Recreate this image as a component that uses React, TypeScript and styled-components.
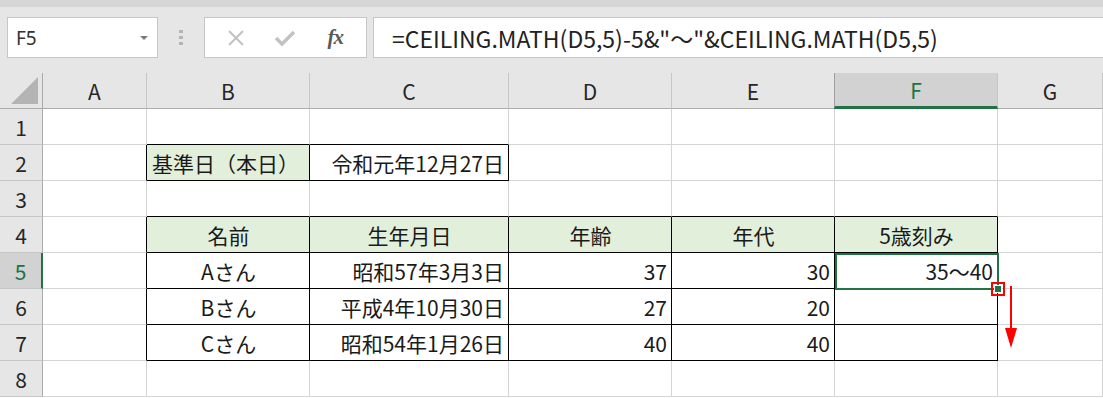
import React from 'react';
import styled, { createGlobalStyle, css } from 'styled-components';

const GlobalStyle = createGlobalStyle`
  html, body {
    margin: 0;
    padding: 0;
    background: #ffffff;
    overflow: hidden;
  }
`;

const GREEN = '#217346';
const GRID = '#d4d4d4';
const CELL_FONT = `"Noto Sans CJK JP", "Noto Sans", sans-serif`;

const Page = styled.div`
  width: 1103px;
  height: 398px;
  overflow: hidden;
  display: flex;
  flex-direction: column;
  font-family: ${CELL_FONT};
`;

const ToolBar = styled.div`
  height: 73px;
  box-sizing: border-box;
  background: #e6e6e6;
  border-top: 7px solid #d6d6d6;
  display: flex;
  align-items: flex-start;
  padding: 10px 0 0 7px;
`;

const Field = styled.div`
  height: 41px;
  box-sizing: border-box;
  background: #ffffff;
  border: 1px solid #c6c6c6;
  display: flex;
  align-items: center;
`;

const NameBox = styled(Field)`
  width: 151px;
  padding: 0 9px 0 8px;
  justify-content: space-between;
  font-family: "Noto Sans", sans-serif;
  font-size: 19px;
  color: #333333;
`;

const Caret = styled.span`
  width: 0;
  height: 0;
  border-left: 4px solid transparent;
  border-right: 4px solid transparent;
  border-top: 4px solid #7a7a7a;
`;

const Grip = styled.div`
  width: 46px;
  height: 41px;
  display: flex;
  flex-direction: column;
  align-items: center;
  justify-content: center;
  gap: 3px;
  span {
    width: 4px;
    height: 3px;
    background: #b4b4b4;
  }
`;

const ButtonBox = styled(Field)`
  width: 163px;
  justify-content: space-around;
  padding: 0 6px;
`;

const IconSlot = styled.span`
  width: 40px;
  display: flex;
  justify-content: center;
  align-items: center;
`;

const Fx = styled.span`
  font-family: "Liberation Serif", "DejaVu Serif", serif;
  font-style: italic;
  font-weight: bold;
  font-size: 21px;
  color: #5a5a5a;
  letter-spacing: -1px;
`;

const FormulaBox = styled(Field)`
  flex: 1;
  margin-left: 6px;
  border-right: 0;
  padding-left: 18px;
  font-size: 23px;
  color: #222222;
  white-space: nowrap;
`;

const Sheet = styled.div`
  display: grid;
  grid-template-columns: 43px 104px 163px 199px 163px 163px 163px 1fr;
  grid-auto-rows: 36px;
`;

const HeadCell = styled.div<{ $active?: boolean; $row?: boolean }>`
  box-sizing: border-box;
  background: #e6e6e6;
  display: flex;
  align-items: center;
  justify-content: center;
  font-size: 21px;
  color: #262626;
  border-right: 1px solid #c6c6c6;
  border-bottom: 1px solid #ababab;
  ${(p) =>
    p.$row &&
    css`
      border-right: 1px solid #ababab;
      border-bottom: 1px solid #c6c6c6;
    `}
  ${(p) =>
    p.$active &&
    !p.$row &&
    css`
      background: #d2d2d2;
      color: ${GREEN};
      border-left: 1px solid #a0a0a0;
      border-bottom: 3px solid ${GREEN};
      margin-left: -1px;
    `}
  ${(p) =>
    p.$active &&
    p.$row &&
    css`
      background: #d2d2d2;
      color: ${GREEN};
      border-right: 2px solid ${GREEN};
    `}
`;

const Corner = styled(HeadCell)`
  justify-content: flex-end;
  align-items: flex-end;
  padding: 0 4px 4px 0;
  border-right: 1px solid #ababab;
`;

type Align = 'left' | 'center' | 'right';

const Cell = styled.div<{ $fill?: boolean; $align: Align; $right: string; $bottom: string; $selected?: boolean }>`
  position: relative;
  z-index: ${(p) => (p.$selected ? 2 : 'auto')};
  box-sizing: border-box;
  display: flex;
  align-items: center;
  justify-content: ${(p) => (p.$align === 'left' ? 'flex-start' : p.$align === 'right' ? 'flex-end' : 'center')};
  padding: 0 4px 0 5px;
  font-size: 21px;
  color: #1a1a1a;
  white-space: nowrap;
  background: ${(p) => (p.$fill ? '#e2efda' : '#ffffff')};
  border-right: 1px solid ${(p) => p.$right};
  border-bottom: 1px solid ${(p) => p.$bottom};
`;

const Selection = styled.div`
  position: absolute;
  left: 0;
  top: 0;
  right: -2px;
  bottom: -2px;
  border: 2px solid ${GREEN};
  pointer-events: none;
`;

const FillHandle = styled.div`
  position: absolute;
  right: -5px;
  bottom: -5px;
  width: 6px;
  height: 6px;
  background: ${GREEN};
  border: 1px solid #ffffff;
  outline: 2px solid #ff0000;
  outline-offset: 1px;
`;

const Arrow = styled.svg`
  position: absolute;
  left: 10px;
  top: 0;
  overflow: visible;
`;

type CellData = { text: string; align: Align; fill?: boolean };

const cols = ['A', 'B', 'C', 'D', 'E', 'F', 'G'];

// keyed by row number, then column index (A = 0)
const data: Record<number, Record<number, CellData>> = {
  2: {
    1: { text: '基準日（本日）', align: 'left', fill: true },
    2: { text: '令和元年12月27日', align: 'right' },
  },
  4: {
    1: { text: '名前', align: 'center', fill: true },
    2: { text: '生年月日', align: 'center', fill: true },
    3: { text: '年齢', align: 'center', fill: true },
    4: { text: '年代', align: 'center', fill: true },
    5: { text: '5歳刻み', align: 'center', fill: true },
  },
  5: {
    1: { text: 'Aさん', align: 'center' },
    2: { text: '昭和57年3月3日', align: 'right' },
    3: { text: '37', align: 'right' },
    4: { text: '30', align: 'right' },
    5: { text: '35～40', align: 'right' },
  },
  6: {
    1: { text: 'Bさん', align: 'center' },
    2: { text: '平成4年10月30日', align: 'right' },
    3: { text: '27', align: 'right' },
    4: { text: '20', align: 'right' },
    5: { text: '', align: 'right' },
  },
  7: {
    1: { text: 'Cさん', align: 'center' },
    2: { text: '昭和54年1月26日', align: 'right' },
    3: { text: '40', align: 'right' },
    4: { text: '40', align: 'right' },
    5: { text: '', align: 'right' },
  },
};

const boxed = (r: number, c: number) => Boolean(data[r] && data[r][c]);

const App = () => {
  const rows = [1, 2, 3, 4, 5, 6, 7, 8];
  return (
    <Page>
      <GlobalStyle />
      <ToolBar>
        <NameBox>
          <span>F5</span>
          <Caret />
        </NameBox>
        <Grip>
          <span />
          <span />
          <span />
        </Grip>
        <ButtonBox>
          <IconSlot>
            <svg width="18" height="18" viewBox="0 0 18 18">
              <path d="M2 2 L16 16 M16 2 L2 16" stroke="#c2c2c2" strokeWidth="2" fill="none" />
            </svg>
          </IconSlot>
          <IconSlot>
            <svg width="22" height="18" viewBox="0 0 22 18">
              <path d="M2 9 L8 15 L20 3" stroke="#c2c2c2" strokeWidth="3.5" fill="none" />
            </svg>
          </IconSlot>
          <IconSlot>
            <Fx>fx</Fx>
          </IconSlot>
        </ButtonBox>
        <FormulaBox>=CEILING.MATH(D5,5)-5&amp;"～"&amp;CEILING.MATH(D5,5)</FormulaBox>
      </ToolBar>
      <Sheet>
        <Corner>
          <svg width="27" height="27" viewBox="0 0 27 27">
            <polygon points="27,0 27,27 0,27" fill="#b4b4b4" />
          </svg>
        </Corner>
        {cols.map((c) => (
          <HeadCell key={c} $active={c === 'F'}>
            {c}
          </HeadCell>
        ))}
        {rows.map((r) => (
          <React.Fragment key={r}>
            <HeadCell $row $active={r === 5}>
              {r}
            </HeadCell>
            {cols.map((_, c) => {
              const d = data[r] && data[r][c];
              const right = boxed(r, c) || boxed(r, c + 1) ? '#000000' : GRID;
              const bottom = boxed(r, c) || boxed(r + 1, c) ? '#000000' : GRID;
              const selected = r === 5 && c === 5;
              return (
                <Cell
                  key={c}
                  $fill={d?.fill}
                  $align={d?.align ?? 'left'}
                  $right={right}
                  $bottom={bottom}
                  $selected={selected}
                >
                  {d?.text}
                  {selected && (
                    <>
                      <Selection />
                      <FillHandle>
                        <Arrow width="12" height="62" viewBox="0 0 12 62">
                          <line x1="6" y1="0" x2="6" y2="44" stroke="#ff0000" strokeWidth="2" />
                          <polygon points="0,42 12,42 6,62" fill="#ff0000" />
                        </Arrow>
                      </FillHandle>
                    </>
                  )}
                </Cell>
              );
            })}
          </React.Fragment>
        ))}
      </Sheet>
    </Page>
  );
};

export default App;
